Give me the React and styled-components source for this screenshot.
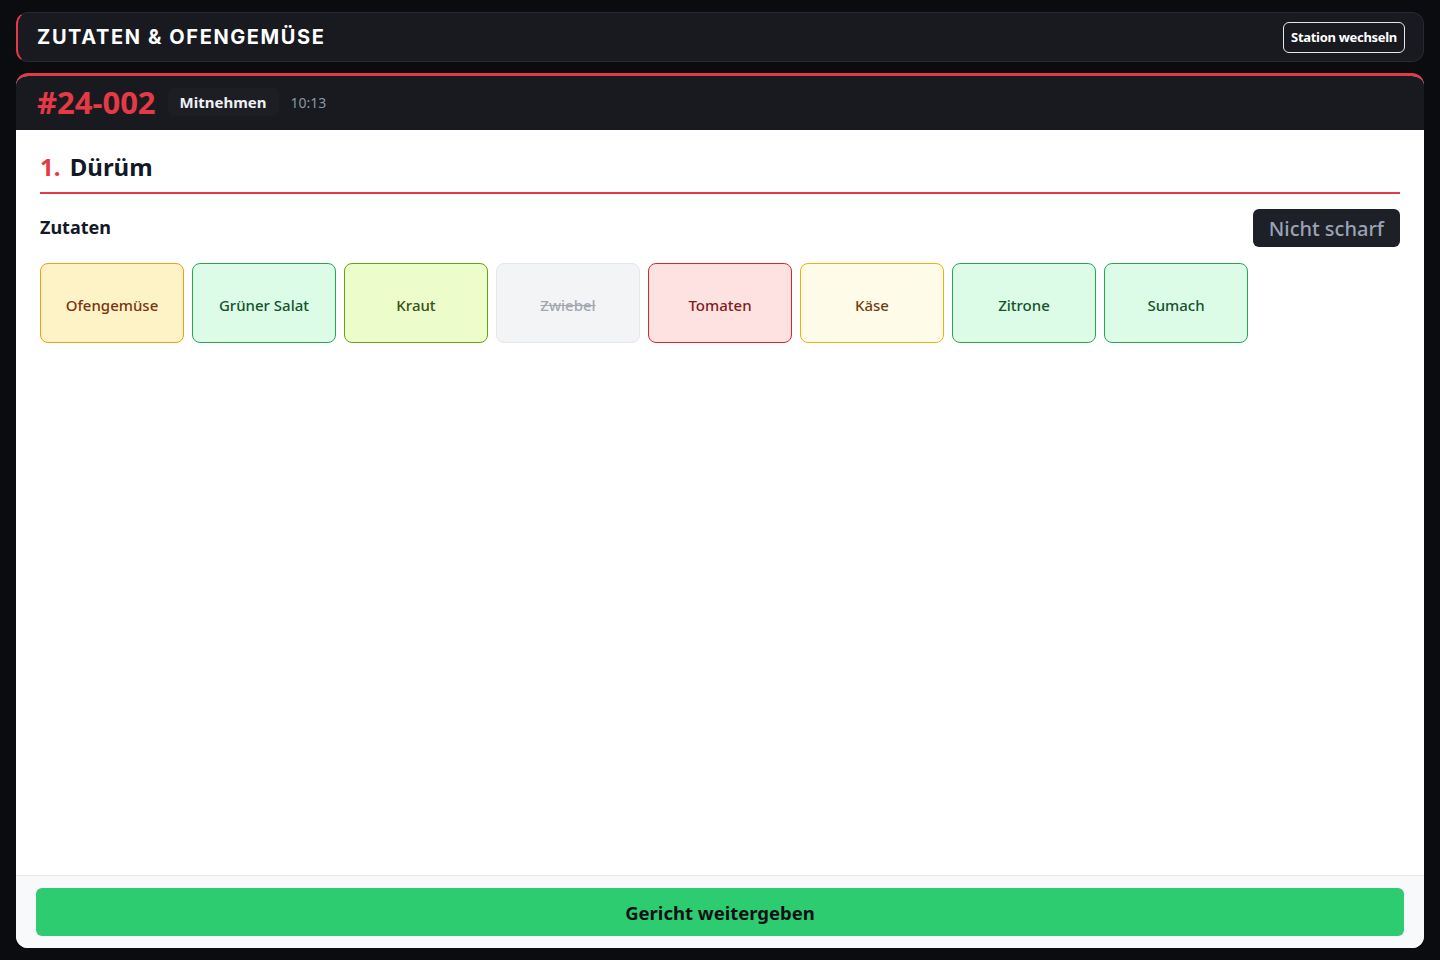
import React from "react";
import styled, { createGlobalStyle } from "styled-components";

const GlobalStyle = createGlobalStyle`
  html, body {
    margin: 0;
    padding: 0;
    background: #0b0c10;
  }
  body {
    font-family: "Noto Sans", "Open Sans", sans-serif;
  }
  ::-webkit-scrollbar {
    width: 12px;
    height: 12px;
  }
  ::-webkit-scrollbar-track {
    background: #0b0c10;
  }
  ::-webkit-scrollbar-thumb {
    background: #3a3d4a;
    border-radius: 6px;
    border-left: 2px solid #0b0c10;
    border-top: 1px solid #0b0c10;
  }
`;

const Page = styled.div`
  width: 100vw;
  height: calc(100vh + 22px);
  box-sizing: border-box;
  padding: 12px 16px 34px;
  display: flex;
  flex-direction: column;
  gap: 11px;
`;

const TopBar = styled.header`
  height: 50px;
  box-sizing: border-box;
  flex-shrink: 0;
  display: flex;
  align-items: center;
  justify-content: space-between;
  padding: 0 18px 0 19px;
  background: #181a20;
  border: 1px solid #262a33;
  border-left: 2px solid #e63946;
  border-radius: 12px;
`;

const StationTitle = styled.h1`
  margin: 0;
  font-family: Inter, "Noto Sans", sans-serif;
  font-size: 20px;
  font-weight: 700;
  letter-spacing: 1.6px;
  color: #ffffff;
`;

const OutlineButton = styled.button`
  height: 31px;
  padding: 0 7px;
  background: transparent;
  border: 1px solid #e5e7eb;
  border-radius: 6px;
  color: #ffffff;
  font-family: "Noto Sans", sans-serif;
  font-size: 13px;
  font-weight: 700;
  letter-spacing: -0.3px;
`;

const OrderCard = styled.section`
  flex: 1;
  display: flex;
  flex-direction: column;
  border-radius: 12px;
  overflow: hidden;
  background: #ffffff;
  border-top: 3px solid #e63946;
`;

const OrderHead = styled.div`
  height: 54px;
  flex-shrink: 0;
  display: flex;
  align-items: center;
  gap: 12px;
  padding: 0 21px;
  background: #181a20;
`;

const OrderNumber = styled.span`
  font-family: "Noto Sans", sans-serif;
  font-size: 31px;
  font-weight: 700;
  color: #e63946;
  margin-top: -2px;
`;

const ModePill = styled.span`
  height: 28px;
  display: flex;
  align-items: center;
  padding: 0 12px;
  border-radius: 6px;
  background: #1c1e24;
  color: #eef0f4;
  font-size: 15px;
  font-weight: 700;
  margin-top: -2px;
`;

const OrderTime = styled.span`
  font-size: 14px;
  color: #8b95a5;
  margin-top: -2px;
`;

const OrderBody = styled.div`
  flex: 1;
  padding: 21px 24px 0;
`;

const DishTitle = styled.h2`
  margin: 0;
  padding-bottom: 9px;
  border-bottom: 2px solid #e63946;
  font-size: 24px;
  font-weight: 700;
  color: #111827;
  line-height: 32px;
  word-spacing: 3px;

  span {
    color: #e63946;
  }
`;

const SectionRow = styled.div`
  margin-top: 15px;
  display: flex;
  align-items: center;
  justify-content: space-between;
`;

const SectionLabel = styled.h3`
  margin: 0 0 2px;
  font-size: 18px;
  font-weight: 700;
  color: #111827;
`;

const SpiceTag = styled.span`
  height: 38px;
  display: flex;
  align-items: center;
  padding: 0 16px;
  border-radius: 6px;
  background: #1e2028;
  color: #9aa3b5;
  font-size: 20px;
  font-weight: 500;
`;

const Tiles = styled.div`
  margin-top: 16px;
  display: flex;
  gap: 8px;
`;

const tones = {
  orange: { bg: "#fef3c7", border: "#f59e0b", fg: "#78350f" },
  green: { bg: "#dcfce7", border: "#22a853", fg: "#14532d" },
  lime: { bg: "#ecfccb", border: "#65a30d", fg: "#365314" },
  off: { bg: "#f3f4f6", border: "#e5e7eb", fg: "#a4a8b1" },
  red: { bg: "#fee2e2", border: "#dc2626", fg: "#7f1d1d" },
  yellow: { bg: "#fefce8", border: "#eab308", fg: "#713f12" },
};

const Tile = styled.div`
  width: 144px;
  height: 80px;
  box-sizing: border-box;
  display: flex;
  align-items: center;
  justify-content: center;
  border-radius: 8px;
  border: 1px solid ${(p) => tones[p.$tone].border};
  background: ${(p) => tones[p.$tone].bg};
  color: ${(p) => tones[p.$tone].fg};
  font-size: 15px;
  font-weight: 500;
  padding-top: 3px;
  text-decoration: ${(p) => (p.$tone === "off" ? "line-through" : "none")};
`;

const Footer = styled.div`
  flex-shrink: 0;
  padding: 12px 20px;
  background: #f8f9fb;
  border-top: 1px solid #e5e7eb;
`;

const PassButton = styled.button`
  width: 100%;
  height: 48px;
  border: none;
  border-radius: 6px;
  background: #2ecc71;
  color: #0f1115;
  font-family: "Noto Sans", sans-serif;
  font-size: 18.5px;
  font-weight: 700;
`;

const ingredients = [
  { name: "Ofengemüse", tone: "orange" },
  { name: "Grüner Salat", tone: "green" },
  { name: "Kraut", tone: "lime" },
  { name: "Zwiebel", tone: "off" },
  { name: "Tomaten", tone: "red" },
  { name: "Käse", tone: "yellow" },
  { name: "Zitrone", tone: "green" },
  { name: "Sumach", tone: "green" },
];

const App = () => {
  return (
    <>
      <GlobalStyle />
      <Page>
        <TopBar>
          <StationTitle>ZUTATEN &amp; OFENGEMÜSE</StationTitle>
          <OutlineButton>Station wechseln</OutlineButton>
        </TopBar>
        <OrderCard>
          <OrderHead>
            <OrderNumber>#24-002</OrderNumber>
            <ModePill>Mitnehmen</ModePill>
            <OrderTime>10:13</OrderTime>
          </OrderHead>
          <OrderBody>
            <DishTitle>
              <span>1.</span> Dürüm
            </DishTitle>
            <SectionRow>
              <SectionLabel>Zutaten</SectionLabel>
              <SpiceTag>Nicht scharf</SpiceTag>
            </SectionRow>
            <Tiles>
              {ingredients.map((ing) => (
                <Tile key={ing.name} $tone={ing.tone}>
                  {ing.name}
                </Tile>
              ))}
            </Tiles>
          </OrderBody>
          <Footer>
            <PassButton>Gericht weitergeben</PassButton>
          </Footer>
        </OrderCard>
      </Page>
    </>
  );
};

export default App;
